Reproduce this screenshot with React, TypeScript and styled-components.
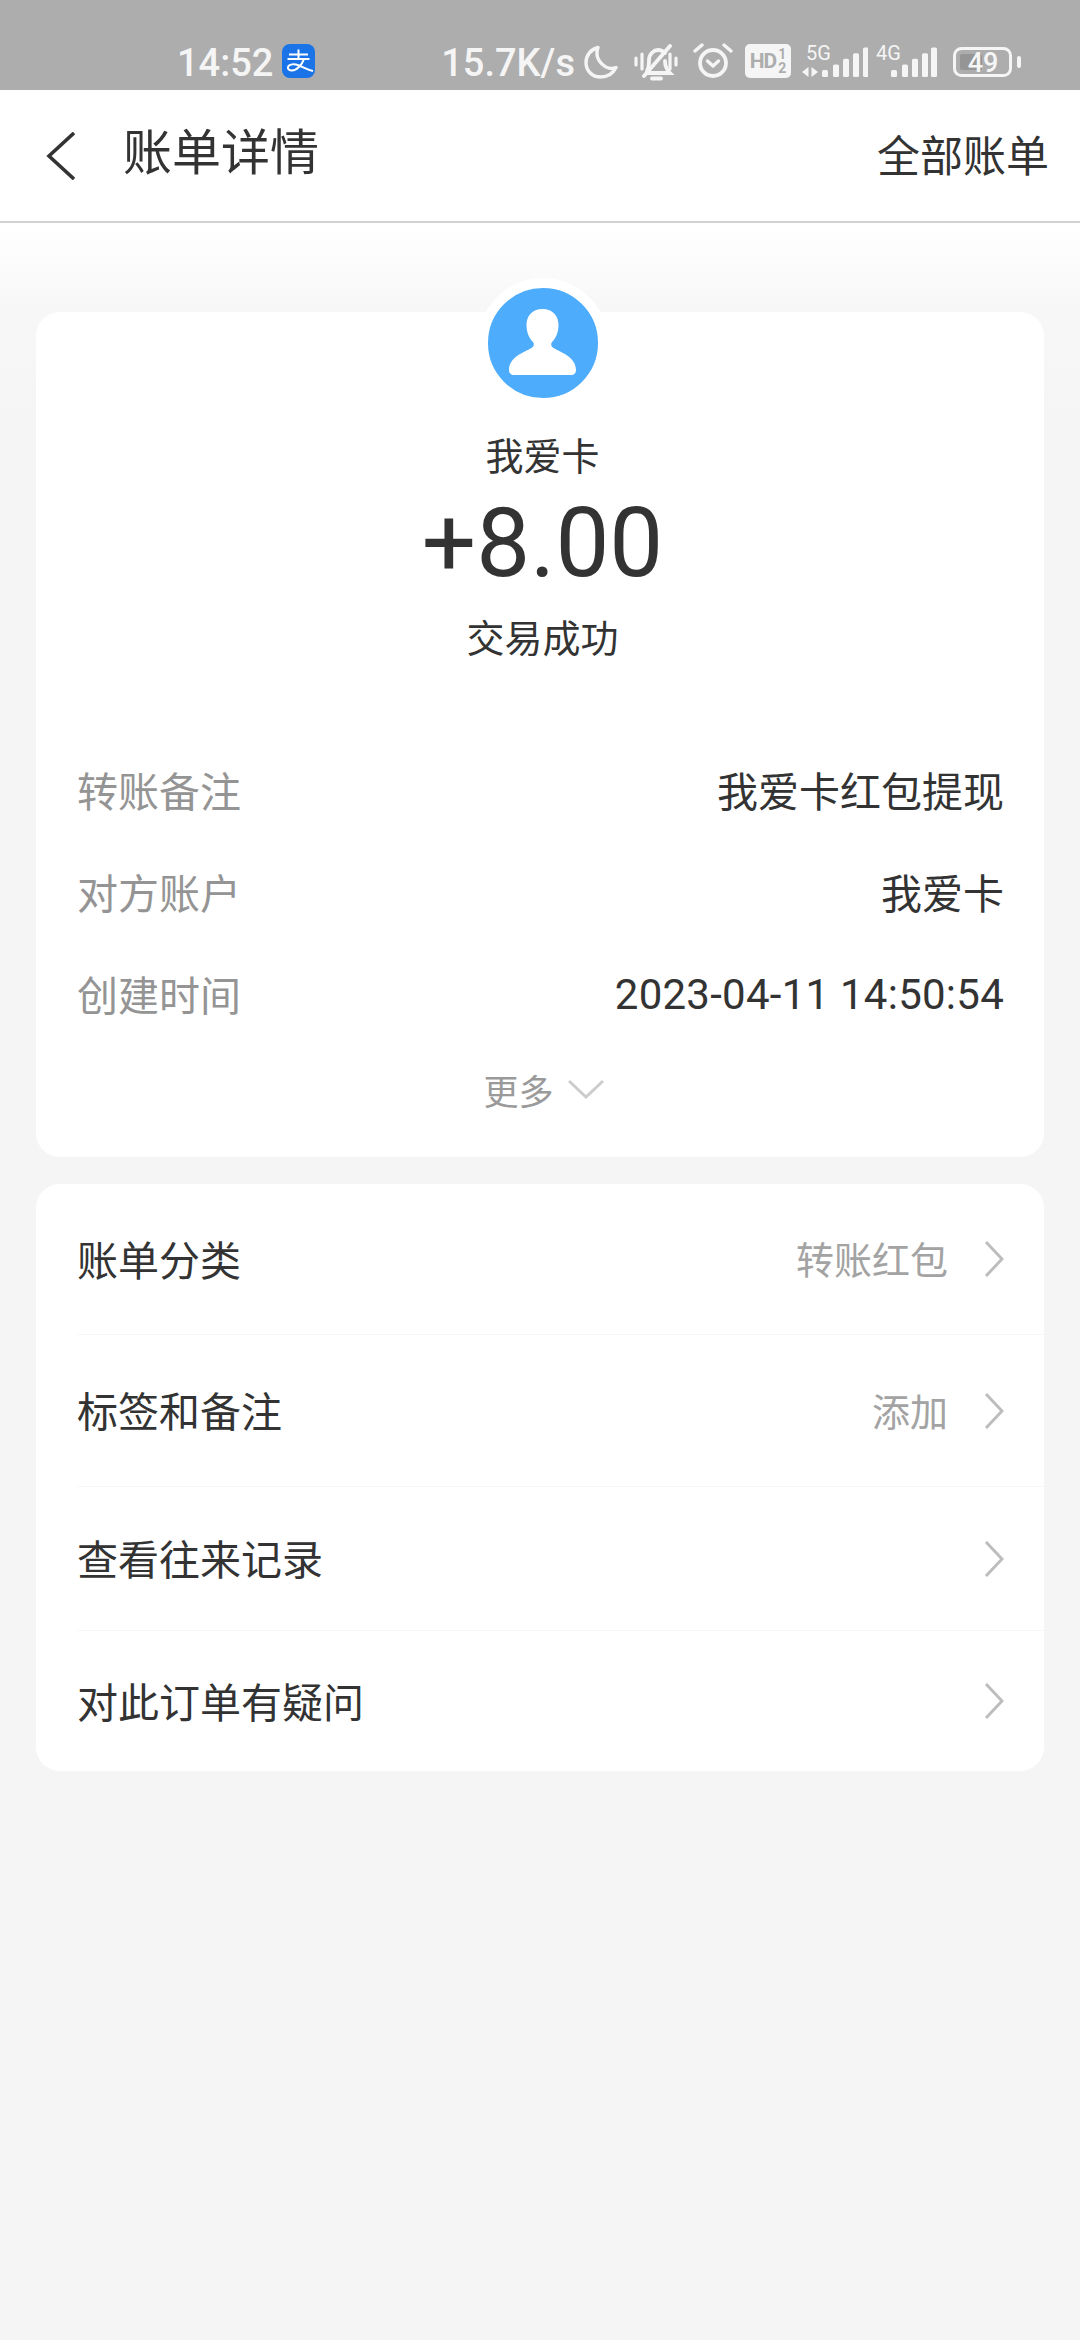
import React from 'react';
import styled, { createGlobalStyle } from 'styled-components';

const GlobalStyle = createGlobalStyle`
  html, body {
    margin: 0;
    padding: 0;
    background: #f5f5f5;
  }
  body {
    font-family: Roboto, "Noto Sans CJK SC", sans-serif;
  }
  * {
    box-sizing: border-box;
  }
`;

const Page = styled.div`
  width: 1080px;
  height: 2340px;
  overflow: hidden;
  display: flex;
  flex-direction: column;
`;

/* status bar */
const StatusBar = styled.div`
  height: 90px;
  flex: none;
  background: #adadad;
  display: flex;
  align-items: flex-start;
  padding: 44px 59px 0 177px;
  color: #f5f5f5;
`;

const StatusText = styled.span`
  font-family: Roboto, sans-serif;
  font-size: 38px;
  font-weight: 500;
  line-height: 38px;
`;

const AppBadge = styled.svg`
  flex: none;
  margin-left: 9px;
`;

const RightIcons = styled.div`
  margin-left: auto;
  display: flex;
  align-items: flex-start;
`;

const StatusIcon = styled.svg<{ $ml: number; $mt?: number }>`
  flex: none;
  display: block;
  margin-left: ${(p) => p.$ml}px;
  margin-top: ${(p) => p.$mt ?? 0}px;
`;

const HdBadge = styled.div`
  width: 46px;
  height: 34px;
  margin-left: 12px;
  border-radius: 5px;
  background: #f5f5f5;
  color: #adadad;
  display: flex;
  align-items: center;
  justify-content: center;
  font-family: Roboto, sans-serif;
  font-weight: 700;
`;

const HdLabel = styled.span`
  font-size: 21px;
  letter-spacing: -1px;
`;

const HdSim = styled.span`
  font-size: 14px;
  line-height: 14px;
  margin-left: 2px;
  display: flex;
  flex-direction: column;
  align-items: center;
`;

/* header */
const Header = styled.header`
  height: 133px;
  flex: none;
  background: #fff;
  border-bottom: 2px solid #d2d2d2;
  display: flex;
  align-items: center;
  padding: 0 31px 0 46px;
`;

const Title = styled.h1`
  margin: 0 0 14px 47px;
  font-family: "Noto Sans CJK SC", sans-serif;
  font-size: 49px;
  font-weight: 400;
  color: #333;
`;

const AllBills = styled.a`
  margin: 0 0 6px auto;
  font-family: "Noto Sans CJK SC", sans-serif;
  font-size: 43px;
  color: #333;
`;

/* content */
const Main = styled.main`
  flex: 1;
  padding: 89px 36px 0;
  display: flex;
  flex-direction: column;
  gap: 27px;
  background: linear-gradient(#ffffff 0, #f7f7f7 89px, #f5f5f5 200px);
`;

const Card = styled.section`
  background: #fff;
  border-radius: 24px;
  display: flex;
  flex-direction: column;
`;

const SummaryCard = styled(Card)`
  height: 845px;
  padding: 0 40px 0 41px;
`;

const SummaryHead = styled.div`
  display: flex;
  flex-direction: column;
  align-items: center;
  padding-left: 4px;
`;

const Avatar = styled.div`
  width: 130px;
  height: 130px;
  margin-top: -34px;
  border: 10px solid #fff;
  border-radius: 50%;
  background: #4dacfb;
  display: flex;
`;

const Name = styled.div`
  margin-top: 18px;
  height: 56px;
  font-family: "Noto Sans CJK SC", sans-serif;
  font-size: 38px;
  line-height: 56px;
  color: #333;
`;

const Amount = styled.div`
  margin-top: 5px;
  height: 112px;
  font-family: Roboto, sans-serif;
  font-size: 96px;
  line-height: 112px;
  color: #333;
`;

const TradeStatus = styled.div`
  margin-top: 9px;
  height: 56px;
  font-family: "Noto Sans CJK SC", sans-serif;
  font-size: 38px;
  line-height: 56px;
  color: #333;
`;

const Details = styled.div`
  margin-top: 74px;
  display: flex;
  flex-direction: column;
`;

const DetailRow = styled.div`
  height: 102px;
  display: flex;
  align-items: center;
  justify-content: space-between;
  font-size: 41px;
  font-family: "Noto Sans CJK SC", sans-serif;
`;

const DetailLabel = styled.span`
  color: #949494;
`;

const DetailValue = styled.span<{ $numeric?: boolean }>`
  color: #333;
  ${(p) =>
    p.$numeric &&
    `
    font-family: Roboto, sans-serif;
    font-size: 42px;
    letter-spacing: 0.25px;
    padding-top: 3px;
  `}
`;

const MoreRow = styled.div`
  margin-top: 17px;
  height: 56px;
  padding-left: 6px;
  display: flex;
  align-items: center;
  justify-content: center;
  gap: 14px;
  font-family: "Noto Sans CJK SC", sans-serif;
  font-size: 35px;
  color: #9a9a9a;
`;

const ActionRow = styled.a<{ $height: number; $last?: boolean }>`
  height: ${(p) => p.$height}px;
  margin-left: 41px;
  padding-right: 40px;
  display: flex;
  align-items: center;
  border-bottom: ${(p) => (p.$last ? 'none' : '1px solid #f6f6f6')};
  font-family: "Noto Sans CJK SC", sans-serif;
  font-size: 41px;
  color: #333;
`;

const ActionLabel = styled.span`
  margin-bottom: 3px;
`;

const ActionValue = styled.span`
  margin: 0 36px 3px auto;
  font-size: 38px;
  color: #a3a3a3;
`;

const ActionChevron = styled.svg<{ $alone: boolean }>`
  flex: none;
  margin-left: ${(p) => (p.$alone ? 'auto' : '0')};
`;

const actions = [
  { label: '账单分类', value: '转账红包', height: 151 },
  { label: '标签和备注', value: '添加', height: 152 },
  { label: '查看往来记录', height: 144 },
  { label: '对此订单有疑问', height: 140 },
];

const details = [
  { label: '转账备注', value: '我爱卡红包提现' },
  { label: '对方账户', value: '我爱卡' },
  { label: '创建时间', value: '2023-04-11 14:50:54', numeric: true },
];

// signal bars share one baseline at y=33 of the box
const SignalBars: React.FC<{ x: number[] }> = ({ x }) => (
  <>
    {x.map((left, i) => {
      const top = 26 - i * 5.6;
      return <rect key={left} x={left} y={top} width="6" height={33 - top} rx="1.5" fill="#f5f5f5" />;
    })}
  </>
);

const App: React.FC = () => {
  return (
    <Page>
      <GlobalStyle />
      <StatusBar>
        <StatusText>14:52</StatusText>
        {/* Alipay app logo */}
        <AppBadge width="33" height="34" viewBox="0 0 33 34" fill="none">
          <rect width="33" height="34" rx="8" fill="#1a74e8" />
          <path
            d="M7 10.500H26M16.500 5.500V15M5.500 15H27.500M22 15C20 21 14.500 26.500 10 26.500C7 26.500 5.500 25 6 23C7 20 12 19.500 17 21.500C21 23 25 25.500 31 27"
            stroke="#fff"
            strokeWidth="2"
          />
        </AppBadge>
        <RightIcons>
          <StatusText>15.7K/s</StatusText>
          {/* moon */}
          <StatusIcon $ml={9} $mt={1} width="34" height="34" viewBox="0 0 34 34" fill="none" stroke="#f5f5f5" strokeWidth="3.400" strokeLinejoin="round">
            <path d="M14 2.500C6.500 4.500 2 10.500 2 17.500C2 26 8.500 32 16.500 32C23 32 29 28.500 32 22.500C22 26.500 9.500 15 14 2.500Z" />
          </StatusIcon>
          {/* muted bell */}
          <StatusIcon $ml={16} width="44" height="38" viewBox="0 0 44 38" fill="none" stroke="#f5f5f5" strokeWidth="3.800" strokeLinecap="round">
            <path d="M2 14V21M8 10V25M36 10V25M42 14V21" strokeWidth="3.200" />
            <path d="M13 27C15 24 15 20 15 16C15 10 20 6 24 6C27 6 29 7 31 9M31 17C31 22 32 25 36 29H13" />
            <path d="M36 2L10 32" />
            <path d="M18 34.500H27" />
          </StatusIcon>
          {/* alarm clock */}
          <StatusIcon $ml={15} $mt={-1} width="40" height="36" viewBox="0 0 40 36" fill="none" stroke="#f5f5f5" strokeLinecap="round">
            <circle cx="20" cy="20" r="13" strokeWidth="3.800" />
            <path d="M2 8L9 2M38 8L31 2" strokeWidth="3.400" />
            <path d="M14.500 18L20 23L25.500 18" strokeWidth="3.400" strokeLinejoin="round" />
          </StatusIcon>
          <HdBadge>
            <HdLabel>HD</HdLabel>
            <HdSim>
              <span>1</span>
              <span>2</span>
            </HdSim>
          </HdBadge>
          {/* 5G signal */}
          <StatusIcon $ml={11} $mt={-6} width="66" height="40" viewBox="0 -6 66 40">
            <text x="4" y="16" fontFamily="Roboto, sans-serif" fontSize="20" fill="#f5f5f5">5G</text>
            <path d="M6.500 23V33L0 28ZM9.500 23V33L16 28Z" fill="#f5f5f5" />
            <SignalBars x={[20, 31, 41, 51, 61]} />
          </StatusIcon>
          {/* 4G signal */}
          <StatusIcon $ml={8} $mt={-6} width="61" height="40" viewBox="0 -6 61 40">
            <text x="0" y="16" fontFamily="Roboto, sans-serif" fontSize="20" fill="#f5f5f5">4G</text>
            <SignalBars x={[15, 26, 36, 46, 55]} />
          </StatusIcon>
          {/* battery */}
          <StatusIcon $ml={16} $mt={3} width="68" height="32" viewBox="0 0 68 32">
            <rect x="1.500" y="1.500" width="56" height="27" rx="7" fill="none" stroke="#f5f5f5" strokeWidth="3" />
            <rect x="7" y="7" width="22" height="16" rx="2" fill="#959595" />
            <text x="30" y="25" textAnchor="middle" fontFamily="Roboto, sans-serif" fontWeight="500" fontSize="27" fill="#f5f5f5">49</text>
            <rect x="64" y="9" width="4" height="12" rx="2" fill="#f5f5f5" />
          </StatusIcon>
        </RightIcons>
      </StatusBar>

      <Header>
        <svg width="30" height="48" viewBox="0 0 30 48" fill="none" stroke="#333" strokeWidth="3.600">
          <path d="M28 1L3 24L28 47" />
        </svg>
        <Title>账单详情</Title>
        <AllBills>全部账单</AllBills>
      </Header>

      <Main>
        <SummaryCard>
          <SummaryHead>
            <Avatar>
              <svg width="110" height="110" viewBox="0 0 110 110" fill="#fff">
                <path d="M54.500 21C44 21 38.500 28 38.500 37C38.500 44 41 50 45 54C46.500 56 46 58.500 43.500 60C36 64.500 21 69 21 82C21 85 23 87 26 87H83C86 87 88 85 88 82C88 69 73 64.500 65.500 60C63 58.500 62.500 56 64 54C68 50 70.500 44 70.500 37C70.500 28 65 21 54.500 21Z" />
              </svg>
            </Avatar>
            <Name>我爱卡</Name>
            <Amount>+8.00</Amount>
            <TradeStatus>交易成功</TradeStatus>
          </SummaryHead>
          <Details>
            {details.map((d) => (
              <DetailRow key={d.label}>
                <DetailLabel>{d.label}</DetailLabel>
                <DetailValue $numeric={d.numeric}>{d.value}</DetailValue>
              </DetailRow>
            ))}
          </Details>
          <MoreRow>
            更多
            <svg width="36" height="20" viewBox="0 0 36 20" fill="none" stroke="#cccccc" strokeWidth="3">
              <path d="M1 2L18 18L35 2" />
            </svg>
          </MoreRow>
        </SummaryCard>

        <Card>
          {actions.map((a, i) => (
            <ActionRow key={a.label} $height={a.height} $last={i === actions.length - 1}>
              <ActionLabel>{a.label}</ActionLabel>
              {a.value && <ActionValue>{a.value}</ActionValue>}
              <ActionChevron $alone={!a.value} width="20" height="36" viewBox="0 0 20 36" fill="none" stroke="#bdbdbd" strokeWidth="3">
                <path d="M2 1L18 18L2 35" />
              </ActionChevron>
            </ActionRow>
          ))}
        </Card>
      </Main>
    </Page>
  );
};

export default App;
